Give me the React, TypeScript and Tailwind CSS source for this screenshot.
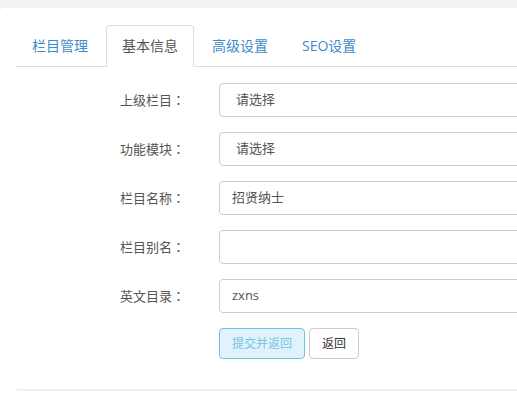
const tabs = ['栏目管理', '基本信息', '高级设置', 'SEO设置'];

const fields = [
  { label: '上级栏目', value: '请选择', select: true },
  { label: '功能模块', value: '请选择', select: true },
  { label: '栏目名称', value: '招贤纳士' },
  { label: '栏目别名', value: '' },
  { label: '英文目录', value: 'zxns' },
];

const App = () => {
  return (
    <div className="h-[394px] w-full overflow-hidden bg-[#f3f3f3] pt-2 font-['Open_Sans','Noto_Sans_CJK_SC',sans-serif]">
      <div className="h-full w-[900px] rounded-tl-[4px] bg-white pl-4 pt-[17px]">
        {/* TABS */}
        <ul className="flex border-b border-[#ddd] text-sm leading-5">
          {tabs.map((tab, i) => (
            <li key={tab} className="-mb-px mr-[2px]">
              <a
                className={
                  i === 1
                    ? 'block rounded-t-[4px] border border-[#ddd] border-b-transparent bg-white px-[15px] py-[10px] text-[#555]'
                    : 'block border border-transparent px-[15px] py-[10px] text-[#428bca]'
                }
              >
                {tab}
              </a>
            </li>
          ))}
        </ul>

        {/* FORM */}
        <div className="rounded-bl-[4px] border-b-2 border-[#efefef] pt-4 pb-[30px] text-[13px]">
          {fields.map((f) => (
            <div key={f.label} className="mb-[15px] flex items-center">
              <label className="w-[169px] text-right text-[#555]">
                {f.label}
                <span className="font-['Noto_Sans_CJK_JP',sans-serif]">：</span>
              </label>
              <div
                className={
                  f.select
                    ? 'ml-[34px] flex h-[34px] flex-1 items-center rounded-[4px] border border-[#ccc] px-4 text-[#555]'
                    : 'ml-[34px] flex h-[34px] flex-1 items-center rounded-[4px] border border-[#ccc] px-3 text-[#555]'
                }
              >
                {f.value}
              </div>
            </div>
          ))}

          {/* BUTTONS */}
          <div className="ml-[203px] flex gap-[4px] text-xs">
            <button className="h-[31px] rounded-[4px] border border-[#6cc3e3] bg-[#e1f3fa] px-3 text-[#72c5e5]">
              提交并返回
            </button>
            <button className="h-[31px] rounded-[4px] border border-[#ccc] bg-white px-3 text-[#333]">
              返回
            </button>
          </div>
        </div>
      </div>
    </div>
  );
};

export default App;
